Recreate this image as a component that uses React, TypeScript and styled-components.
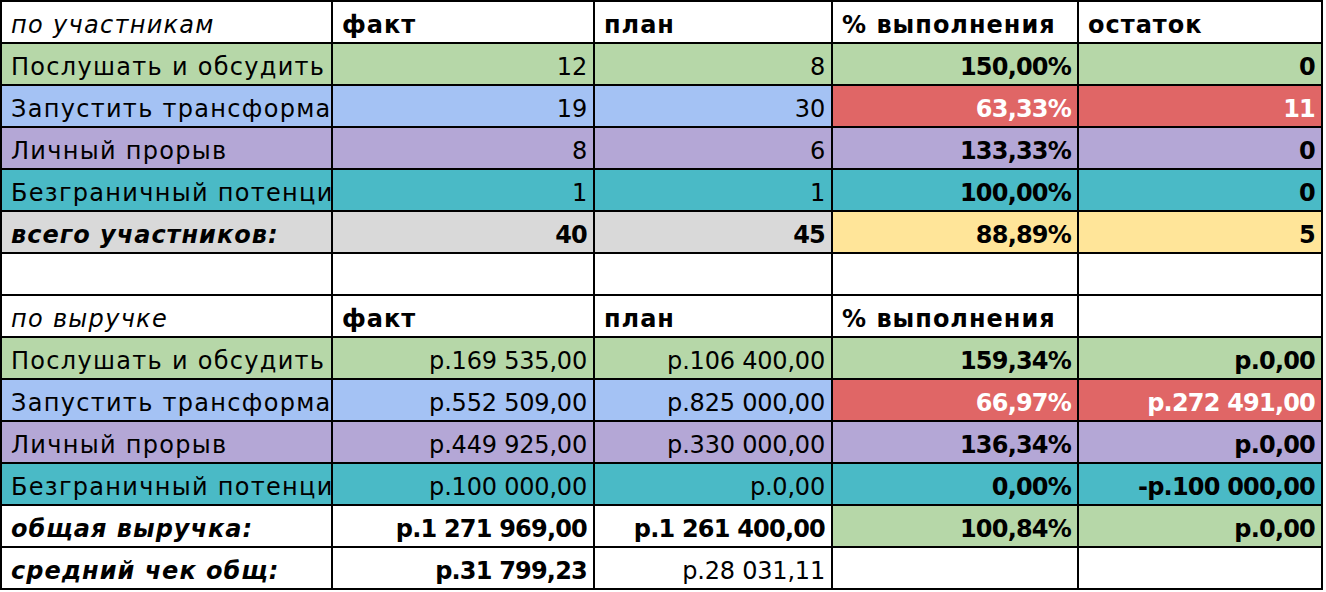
import React from "react";
import styled, { createGlobalStyle } from "styled-components";

const GlobalStyle = createGlobalStyle`
  html, body { margin: 0; padding: 0; background: #ffffff; }
  body { font-family: "DejaVu Sans", "Liberation Sans", sans-serif; }
`;

const C = {
  white: "#ffffff",
  green: "#b6d7a8",
  blue: "#a4c2f4",
  purple: "#b4a7d6",
  teal: "#4abac6",
  gray: "#d9d9d9",
  red: "#e06666",
  yellow: "#ffe599",
};

const Sheet = styled.div`
  display: grid;
  grid-template-columns: 329px 260px 236px 244px 242px;
  grid-auto-rows: 40px;
  gap: 2px;
  padding: 2px;
  width: max-content;
  background: #000000;
`;

type CellProps = {
  $bg?: string;
  $right?: boolean;
  $bold?: boolean;
  $italic?: boolean;
  $light?: boolean;
};

const spacing = (p: CellProps) => {
  if (p.$right) return p.$bold ? "-0.8px" : "-0.2px";
  return p.$bold ? "1px" : "1.3px";
};

const Cell = styled.div<CellProps>`
  display: flex;
  align-items: center;
  justify-content: ${(p) => (p.$right ? "flex-end" : "flex-start")};
  padding: 5px 6px 0 9px;
  background: ${(p) => p.$bg || C.white};
  color: ${(p) => (p.$light ? "#ffffff" : "#000000")};
  font-size: 24px;
  letter-spacing: ${spacing};
  font-weight: ${(p) => (p.$bold ? 700 : 400)};
  font-style: ${(p) => (p.$italic ? "italic" : "normal")};
  white-space: nowrap;
  overflow: hidden;
  min-width: 0;
`;

type Item = {
  t?: string;
  bg?: string;
  r?: boolean;
  b?: boolean;
  i?: boolean;
  w?: boolean;
};

const rows: Item[][] = [
  [
    { t: "по участникам", i: true },
    { t: "факт", b: true },
    { t: "план", b: true },
    { t: "% выполнения", b: true },
    { t: "остаток", b: true },
  ],
  [
    { t: "Послушать и обсудить", bg: C.green },
    { t: "12", bg: C.green, r: true },
    { t: "8", bg: C.green, r: true },
    { t: "150,00%", bg: C.green, r: true, b: true },
    { t: "0", bg: C.green, r: true, b: true },
  ],
  [
    { t: "Запустить трансформацию", bg: C.blue },
    { t: "19", bg: C.blue, r: true },
    { t: "30", bg: C.blue, r: true },
    { t: "63,33%", bg: C.red, r: true, b: true, w: true },
    { t: "11", bg: C.red, r: true, b: true, w: true },
  ],
  [
    { t: "Личный прорыв", bg: C.purple },
    { t: "8", bg: C.purple, r: true },
    { t: "6", bg: C.purple, r: true },
    { t: "133,33%", bg: C.purple, r: true, b: true },
    { t: "0", bg: C.purple, r: true, b: true },
  ],
  [
    { t: "Безграничный потенциал", bg: C.teal },
    { t: "1", bg: C.teal, r: true },
    { t: "1", bg: C.teal, r: true },
    { t: "100,00%", bg: C.teal, r: true, b: true },
    { t: "0", bg: C.teal, r: true, b: true },
  ],
  [
    { t: "всего участников:", bg: C.gray, b: true, i: true },
    { t: "40", bg: C.gray, r: true, b: true },
    { t: "45", bg: C.gray, r: true, b: true },
    { t: "88,89%", bg: C.yellow, r: true, b: true },
    { t: "5", bg: C.yellow, r: true, b: true },
  ],
  [{}, {}, {}, {}, {}],
  [
    { t: "по выручке", i: true },
    { t: "факт", b: true },
    { t: "план", b: true },
    { t: "% выполнения", b: true },
    {},
  ],
  [
    { t: "Послушать и обсудить", bg: C.green },
    { t: "р.169 535,00", bg: C.green, r: true },
    { t: "р.106 400,00", bg: C.green, r: true },
    { t: "159,34%", bg: C.green, r: true, b: true },
    { t: "р.0,00", bg: C.green, r: true, b: true },
  ],
  [
    { t: "Запустить трансформацию", bg: C.blue },
    { t: "р.552 509,00", bg: C.blue, r: true },
    { t: "р.825 000,00", bg: C.blue, r: true },
    { t: "66,97%", bg: C.red, r: true, b: true, w: true },
    { t: "р.272 491,00", bg: C.red, r: true, b: true, w: true },
  ],
  [
    { t: "Личный прорыв", bg: C.purple },
    { t: "р.449 925,00", bg: C.purple, r: true },
    { t: "р.330 000,00", bg: C.purple, r: true },
    { t: "136,34%", bg: C.purple, r: true, b: true },
    { t: "р.0,00", bg: C.purple, r: true, b: true },
  ],
  [
    { t: "Безграничный потенциал", bg: C.teal },
    { t: "р.100 000,00", bg: C.teal, r: true },
    { t: "р.0,00", bg: C.teal, r: true },
    { t: "0,00%", bg: C.teal, r: true, b: true },
    { t: "-р.100 000,00", bg: C.teal, r: true, b: true },
  ],
  [
    { t: "общая выручка:", b: true, i: true },
    { t: "р.1 271 969,00", r: true, b: true },
    { t: "р.1 261 400,00", r: true, b: true },
    { t: "100,84%", bg: C.green, r: true, b: true },
    { t: "р.0,00", bg: C.green, r: true, b: true },
  ],
  [
    { t: "средний чек общ:", b: true, i: true },
    { t: "р.31 799,23", r: true, b: true },
    { t: "р.28 031,11", r: true },
    {},
    {},
  ],
];

export default function App() {
  return (
    <>
      <GlobalStyle />
      <Sheet>
        {rows.map((row, ri) =>
          row.map((c, ci) => (
            <Cell
              key={`${ri}-${ci}`}
              $bg={c.bg}
              $right={c.r}
              $bold={c.b}
              $italic={c.i}
              $light={c.w}
            >
              {c.t}
            </Cell>
          ))
        )}
      </Sheet>
    </>
  );
}
